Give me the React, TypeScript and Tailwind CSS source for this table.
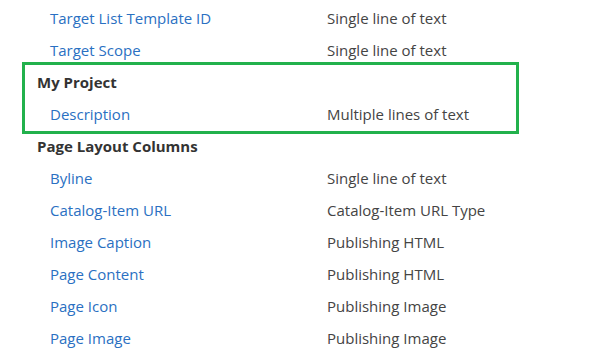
import React from "react";

type Item = { name: string; type?: string; header?: boolean };

const before: Item[] = [
  { name: "Target List Template ID", type: "Single line of text" },
  { name: "Target Scope", type: "Single line of text" },
];
const boxed: Item[] = [
  { name: "My Project", header: true },
  { name: "Description", type: "Multiple lines of text" },
];
const after: Item[] = [
  { name: "Page Layout Columns", header: true },
  { name: "Byline", type: "Single line of text" },
  { name: "Catalog-Item URL", type: "Catalog-Item URL Type" },
  { name: "Image Caption", type: "Publishing HTML" },
  { name: "Page Content", type: "Publishing HTML" },
  { name: "Page Icon", type: "Publishing Image" },
  { name: "Page Image", type: "Publishing Image" },
];

function Row({ item, offset }: { item: Item; offset: number }) {
  if (item.header) {
    return (
      <div className="flex h-[32px] items-center">
        <span
          className="font-bold text-[#333333]"
          style={{ paddingLeft: 37 - offset }}
        >
          {item.name}
        </span>
      </div>
    );
  }
  return (
    <div className="flex h-[32px] items-center">
      <span
        className="shrink-0 text-[#2a70c2]"
        style={{ width: 327 - offset, paddingLeft: 50 - offset }}
      >
        {item.name}
      </span>
      <span className="text-[#444444]">{item.type}</span>
    </div>
  );
}

export default function App() {
  return (
    <div
      className="w-[598px] h-[357px] overflow-hidden bg-white pt-[2px] text-[15px] leading-[20px]"
      style={{ fontFamily: '"Open Sans", "Noto Sans", sans-serif' }}
    >
      {before.map((it) => (
        <Row key={it.name} item={it} offset={0} />
      ))}
      <div className="relative -my-[4px] ml-[22px] w-[497px] border-[3px] border-[#22b14c] py-[1px]">
        {boxed.map((it) => (
          <Row key={it.name} item={it} offset={25} />
        ))}
      </div>
      {after.map((it) => (
        <Row key={it.name} item={it} offset={0} />
      ))}
    </div>
  );
}
